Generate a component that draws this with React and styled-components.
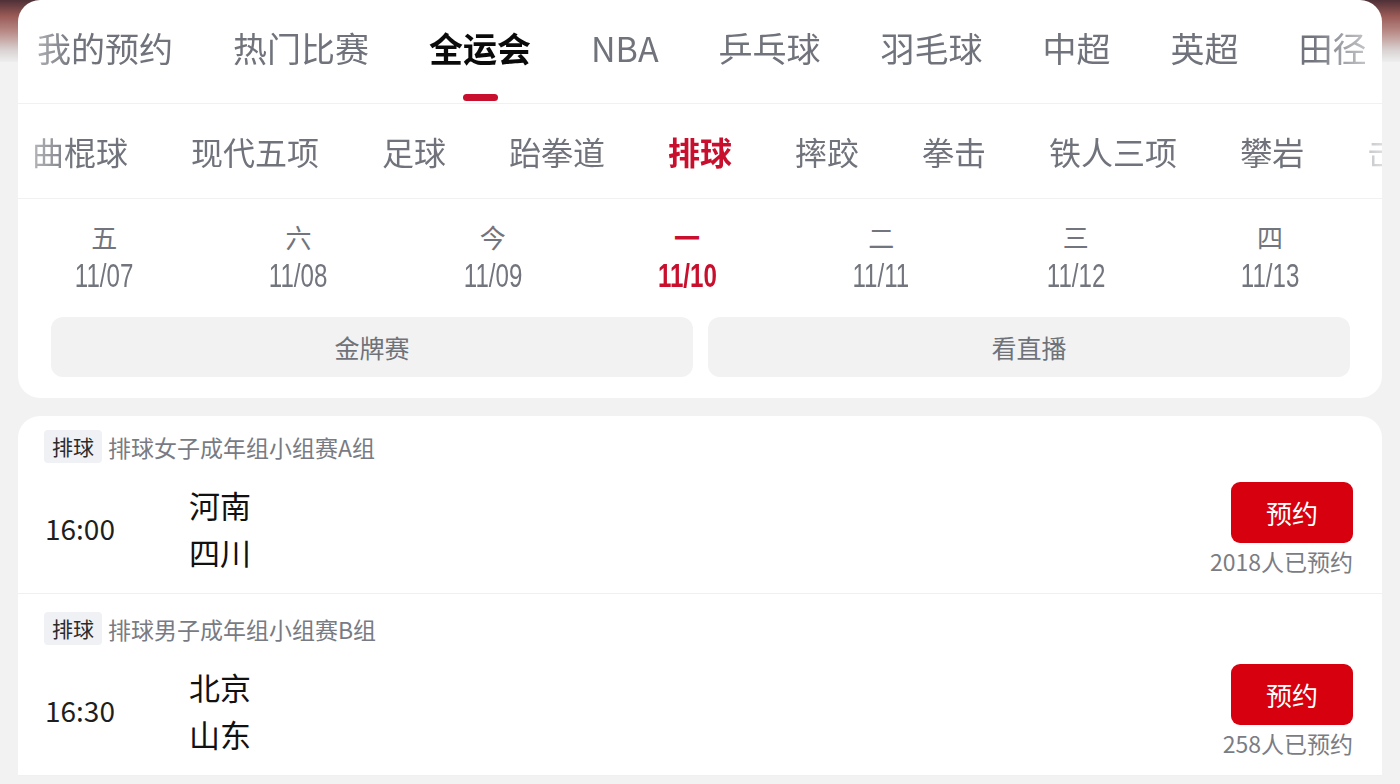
import React from "react";
import styled, { createGlobalStyle } from "styled-components";

const GlobalStyle = createGlobalStyle`
  * { box-sizing: border-box; }
  body {
    margin: 0;
    font-family: "Noto Sans CJK SC", "Noto Sans", sans-serif;
    background:
      linear-gradient(to bottom, #4e3036 0px, #9a5a56 16px, #b98c88 32px, #d9d2d2 50px, #eeeeee 62px) top / 100% 62px no-repeat,
      #f2f2f2;
  }
`;

const mainTabs = ["我的预约", "热门比赛", "全运会", "NBA", "乒乓球", "羽毛球", "中超", "英超", "田径"];
const subTabs = ["曲棍球", "现代五项", "足球", "跆拳道", "排球", "摔跤", "拳击", "铁人三项", "攀岩", "击剑"];
const days = [
  { w: "五", d: "11/07" },
  { w: "六", d: "11/08" },
  { w: "今", d: "11/09" },
  { w: "一", d: "11/10", active: true },
  { w: "二", d: "11/11" },
  { w: "三", d: "11/12" },
  { w: "四", d: "11/13" },
];
const matches = [
  { title: "排球女子成年组小组赛A组", time: "16:00", home: "河南", away: "四川", count: 2018 },
  { title: "排球男子成年组小组赛B组", time: "16:30", home: "北京", away: "山东", count: 258 },
];

export default function App() {
  return (
    <>
      <GlobalStyle />
      <Page>
        <TopCard>
          <MainTabBar>
            <MainTabScroller>
              {mainTabs.map((t) => (
                <MainTab key={t} $active={t === "全运会"}>
                  {t}
                </MainTab>
              ))}
            </MainTabScroller>
          </MainTabBar>
          <SubTabBar>
            <SubTabScroller>
              {subTabs.map((t) => (
                <SubTab key={t} $active={t === "排球"}>
                  {t}
                </SubTab>
              ))}
            </SubTabScroller>
          </SubTabBar>
          <DateRow>
            {days.map((day) => (
              <DateCell key={day.d} $active={day.active}>
                <Weekday>{day.w}</Weekday>
                <DateNum>{day.d}</DateNum>
              </DateCell>
            ))}
          </DateRow>
          <FilterRow>
            <FilterButton>金牌赛</FilterButton>
            <FilterButton>看直播</FilterButton>
          </FilterRow>
        </TopCard>

        <ListCard>
          {matches.map((m) => (
            <MatchBlock key={m.title}>
              <MatchHead>
                <SportTag>排球</SportTag>
                <MatchTitle>{m.title}</MatchTitle>
              </MatchHead>
              <MatchBody>
                <MatchTime>{m.time}</MatchTime>
                <Teams>
                  <Team>{m.home}</Team>
                  <Team>{m.away}</Team>
                </Teams>
                <Reserve>
                  <ReserveButton>预约</ReserveButton>
                  <ReserveCount>{m.count}人已预约</ReserveCount>
                </Reserve>
              </MatchBody>
            </MatchBlock>
          ))}
        </ListCard>
      </Page>
    </>
  );
}

const Page = styled.div`
  display: flex;
  flex-direction: column;
  gap: 18px;
  padding: 0 18px;
  min-height: 784px;
`;

const Card = styled.div`
  background: #ffffff;
  border-radius: 22px;
  overflow: hidden;
`;

const TopCard = styled(Card)``;

const ListCard = styled(Card)`
  border-radius: 22px 22px 0 0;
`;

const MainTabBar = styled.div`
  height: 104px;
  border-bottom: 1px solid #f1f1f1;
`;

const fade = `
  -webkit-mask-image: linear-gradient(to right, rgba(0,0,0,0.35) 0, #000 56px, #000 calc(100% - 70px), rgba(0,0,0,0.25) 100%);
  mask-image: linear-gradient(to right, rgba(0,0,0,0.35) 0, #000 56px, #000 calc(100% - 70px), rgba(0,0,0,0.25) 100%);
`;

const MainTabScroller = styled.div`
  display: flex;
  gap: 60px;
  height: 100%;
  padding-left: 19px;
  white-space: nowrap;
  overflow: hidden;
  ${fade}
`;

const MainTab = styled.div`
  position: relative;
  flex-shrink: 0;
  padding-top: 27px;
  font-size: 34px;
  line-height: 42px;
  color: ${(p) => (p.$active ? "#0a0a0a" : "#70737b")};
  font-weight: ${(p) => (p.$active ? 700 : 400)};

  &::after {
    content: "";
    display: ${(p) => (p.$active ? "block" : "none")};
    position: absolute;
    left: 50%;
    bottom: 2px;
    width: 35px;
    height: 7px;
    margin-left: -17px;
    border-radius: 4px;
    background: #c8102e;
  }
`;

const SubTabBar = styled.div`
  height: 95px;
  border-bottom: 1px solid #f1f1f1;
`;

const SubTabScroller = styled.div`
  display: flex;
  align-items: center;
  gap: 63px;
  height: 100%;
  padding-left: 14px;
  white-space: nowrap;
  overflow: hidden;
  ${fade}
`;

const SubTab = styled.div`
  flex-shrink: 0;
  font-size: 32px;
  line-height: 40px;
  color: ${(p) => (p.$active ? "#c8102e" : "#70737b")};
  font-weight: ${(p) => (p.$active ? 700 : 400)};
`;

const DateRow = styled.div`
  display: grid;
  grid-template-columns: repeat(7, 194.3px);
  margin-left: -11px;
  padding-top: 20px;
`;

const DateCell = styled.div`
  display: flex;
  flex-direction: column;
  align-items: center;
  color: ${(p) => (p.$active ? "#c8102e" : "#72757d")};
  font-weight: ${(p) => (p.$active ? 700 : 400)};
`;

const Weekday = styled.div`
  font-size: 26px;
  line-height: 36px;
`;

const DateNum = styled.div`
  font-family: "Liberation Sans", Arial, sans-serif;
  font-size: 33px;
  line-height: 42px;
  transform: scaleX(0.73);
`;

const FilterRow = styled.div`
  display: grid;
  grid-template-columns: 1fr 1fr;
  gap: 15px;
  padding: 20px 32px 21px 33px;
`;

const FilterButton = styled.div`
  height: 60px;
  border-radius: 12px;
  background: #f2f2f3;
  display: flex;
  align-items: center;
  justify-content: center;
  font-size: 25px;
  color: #6f7278;
`;

const MatchBlock = styled.div`
  padding: 18px 29px 16px 26px;
  border-bottom: 1px solid #f0f0f0;

  &:first-child {
    padding-top: 14px;
  }
`;

const MatchHead = styled.div`
  display: flex;
  align-items: center;
  gap: 6px;
  height: 33px;
`;

const SportTag = styled.span`
  height: 33px;
  padding: 0 8px;
  border-radius: 4px;
  background: #eff1f5;
  font-size: 21px;
  line-height: 33px;
  color: #2b2b2b;
`;

const MatchTitle = styled.span`
  font-size: 23px;
  color: #787b83;
`;

const MatchBody = styled.div`
  display: flex;
  align-items: center;
  margin-top: 15px;
`;

const MatchTime = styled.div`
  width: 145px;
  padding-left: 1px;
  font-size: 28px;
  color: #1e1e1e;
`;

const Teams = styled.div`
  display: flex;
  flex-direction: column;
  flex: 1;
`;

const Team = styled.div`
  font-size: 31px;
  line-height: 47px;
  color: #111111;
`;

const Reserve = styled.div`
  display: flex;
  flex-direction: column;
  align-items: flex-end;
  padding-top: 4px;
`;

const ReserveButton = styled.div`
  width: 122px;
  height: 61px;
  border-radius: 9px;
  background: #d6000f;
  color: #ffffff;
  font-size: 26px;
  display: flex;
  align-items: center;
  justify-content: center;
`;

const ReserveCount = styled.div`
  margin-top: 2px;
  font-size: 23px;
  line-height: 32px;
  color: #7a7d84;
`;
